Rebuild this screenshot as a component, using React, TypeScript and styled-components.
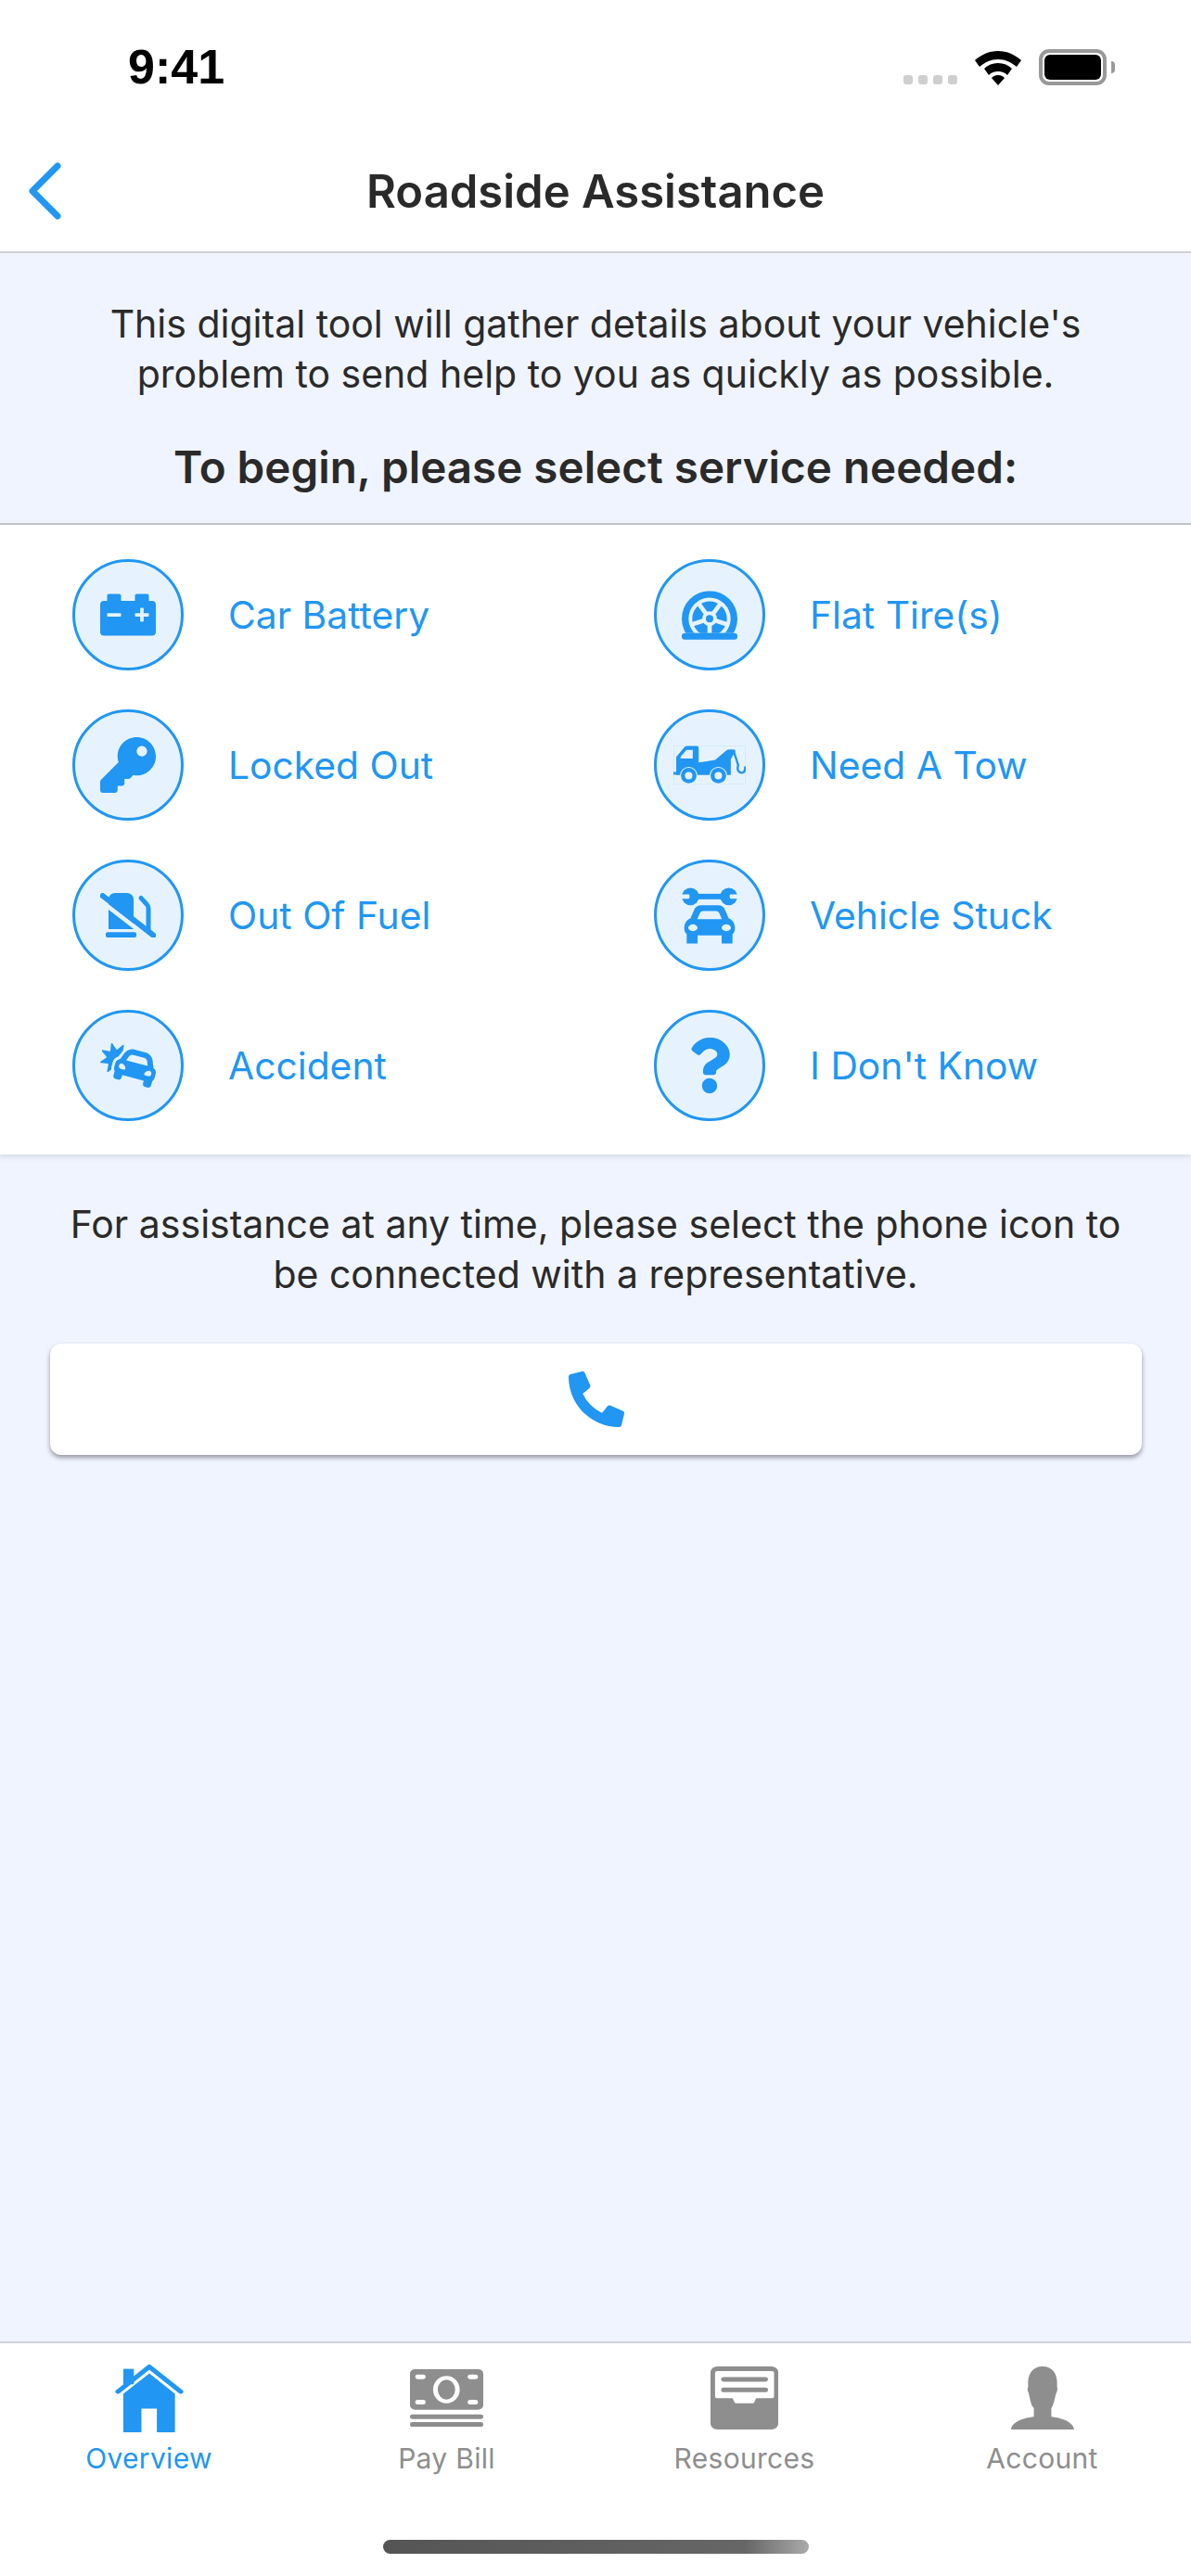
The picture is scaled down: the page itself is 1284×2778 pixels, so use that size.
import React from 'react';
import styled, { createGlobalStyle } from 'styled-components';
import { FaCarBattery, FaCarCrash, FaKey, FaPhoneAlt, FaQuestion } from 'react-icons/fa';

const BLUE = '#2196f3';
const TINT = '#e6f3fe';
const GRAY = '#8e8e8e';

const GlobalStyle = createGlobalStyle`
  html, body {
    margin: 0;
    padding: 0;
    background: #fff;
  }
  * {
    box-sizing: border-box;
  }
`;

const Page = styled.div`
  width: 1284px;
  height: 2778px;
  display: flex;
  flex-direction: column;
  background: #f0f4fe;
  font-family: Inter, 'Liberation Sans', sans-serif;
  color: #2a2a2a;
  overflow: hidden;
`;

const StatusBar = styled.div`
  height: 130px;
  flex: none;
  background: #fff;
  display: flex;
  justify-content: space-between;
  align-items: flex-start;
  padding: 42px 91px 0 138px;
`;

const Clock = styled.span`
  font-family: 'Liberation Sans', sans-serif;
  font-weight: 700;
  font-size: 52px;
  line-height: 60px;
  color: #000;
`;

const StatusIcons = styled.div`
  display: flex;
  align-items: flex-end;
  padding-top: 11px;
  height: 50px;
`;

const SignalDots = styled.div`
  display: flex;
  gap: 6px;
  margin-right: 19px;
  margin-bottom: 1px;
`;

const SignalDot = styled.span`
  width: 10px;
  height: 10px;
  border-radius: 3px;
  background: #cfcfcf;
`;

const BatteryShell = styled.div`
  width: 73px;
  height: 39px;
  margin-left: 19px;
  border: 4px solid #999;
  border-radius: 11px;
  padding: 2px;
  position: relative;

  &::after {
    content: '';
    position: absolute;
    right: -13px;
    top: 9px;
    width: 4px;
    height: 13px;
    border-radius: 0 4px 4px 0;
    background: #999;
  }
`;

const BatteryFill = styled.div`
  width: 100%;
  height: 100%;
  border-radius: 6px;
  background: #000;
`;

const NavBar = styled.header`
  height: 143px;
  flex: none;
  background: #fff;
  border-bottom: 2px solid #cfcfd6;
  display: flex;
  align-items: center;
  justify-content: center;
  position: relative;
`;

const BackButton = styled.span`
  position: absolute;
  left: 30px;
  top: 45px;
  display: flex;
`;

const NavTitle = styled.h1`
  margin: 0;
  font-size: 49px;
  font-weight: 600;
  line-height: 58px;
  padding-top: 12px;
`;

const Intro = styled.section`
  height: 293px;
  flex: none;
  padding-top: 49px;
  border-bottom: 2px solid #c5c7ce;
  text-align: center;
`;

const IntroText = styled.p`
  margin: 0;
  font-size: 41px;
  line-height: 54px;
`;

const IntroPrompt = styled.p`
  margin: 45px 0 0;
  font-size: 47.6px;
  font-weight: 600;
  line-height: 58px;
`;

const ServiceGrid = styled.section`
  flex: none;
  height: 679px;
  background: #fff;
  display: grid;
  grid-template-columns: 627px 1fr;
  grid-auto-rows: 120px;
  row-gap: 42px;
  padding: 37px 0 0 78px;
  box-shadow: 0 2px 6px rgba(80, 90, 120, 0.18);
  position: relative;
`;

const ServiceRow = styled.div`
  display: flex;
  align-items: center;
  gap: 48px;
`;

const ServiceCircle = styled.span`
  width: 120px;
  height: 120px;
  flex: none;
  border-radius: 50%;
  border: 3px solid ${BLUE};
  background: ${TINT};
  color: ${BLUE};
  display: flex;
  align-items: center;
  justify-content: center;
`;

const ServiceLabel = styled.span`
  font-size: 40.8px;
  color: ${BLUE};
`;

const Help = styled.section`
  flex: 1;
  padding: 48px 54px 0;
`;

const HelpText = styled.p`
  margin: 0;
  text-align: center;
  font-size: 41px;
  line-height: 54px;
`;

const CallButton = styled.button`
  display: flex;
  align-items: center;
  justify-content: center;
  width: 1177px;
  height: 120px;
  margin-top: 48px;
  border: 0;
  padding: 0;
  border-radius: 12px;
  background: #fff;
  color: ${BLUE};
  box-shadow: 0 3px 5px rgba(40, 40, 50, 0.45);
`;

const TabBar = styled.nav`
  height: 253px;
  flex: none;
  background: #fff;
  border-top: 2px solid #cfd0d8;
  position: relative;
  display: grid;
  grid-template-columns: repeat(4, 321px);
`;

const Tab = styled.div<{ $active?: boolean }>`
  height: 142px;
  display: flex;
  flex-direction: column;
  align-items: center;
  justify-content: flex-end;
  gap: 9px;
  color: ${({ $active }) => ($active ? BLUE : GRAY)};
`;

const TabIcon = styled.span`
  height: 76px;
  display: flex;
  align-items: center;
`;

const TabLabel = styled.span`
  font-size: 30px;
  line-height: 36px;
  letter-spacing: 0.3px;
`;

const HomeIndicator = styled.div`
  position: absolute;
  left: 413px;
  top: 212px;
  width: 459px;
  height: 15px;
  border-radius: 8px;
  background: linear-gradient(90deg, #555 0%, #666 85%, #aaa 100%);
`;

const WifiGlyph = () => (
  <svg width="50" height="37" viewBox="0 0 50 37" fill="#000">
    <path d="M25 0C15 0 7 4 0 10l5 7c6-5 12-8 20-8s14 3 20 8l5-7C43 4 35 0 25 0z" />
    <path d="M25 13c-6 0-11 2-15 6l5 7c3-3 6-4 10-4s7 1 10 4l5-7c-4-4-9-6-15-6z" />
    <path d="M25 26c-3 0-5 1-7 3l7 8 7-8c-2-2-4-3-7-3z" />
  </svg>
);

const BackChevron = () => (
  <svg width="36" height="62" viewBox="0 0 36 62" fill="none">
    <path d="M32 4 L5 31 L32 58" stroke={BLUE} strokeWidth="7" strokeLinecap="round" strokeLinejoin="round" />
  </svg>
);

const FlatTireGlyph = () => (
  <svg width="60" height="53" viewBox="165 181 180 158">
    <defs>
      <clipPath id="rimClip">
        <rect x="165" y="181" width="180" height="137" />
      </clipPath>
    </defs>
    <g clipPath="url(#rimClip)">
      <circle cx="255" cy="271" r="90" fill={BLUE} />
      <circle cx="255" cy="271" r="68" fill={TINT} />
      <circle cx="255" cy="271" r="56" fill={BLUE} />
      {[36, 108, 180, 252, 324].map((a) => (
        <rect key={a} x="248" y="205" width="14" height="66" fill={TINT} transform={`rotate(${a} 255 271)`} />
      ))}
      <circle cx="255" cy="271" r="24" fill={TINT} />
      <circle cx="255" cy="271" r="12" fill={BLUE} />
    </g>
    <rect x="165" y="318" width="180" height="21" rx="10" fill={BLUE} />
  </svg>
);

const TowTruckGlyph = () => (
  <svg width="78" height="42" viewBox="136 676 232 124">
    <rect x="137" y="677" width="230" height="122" fill="none" stroke="#cfe6fb" strokeWidth="2" />
    <path
      d="M145 770V712l27-32q3-3 8-3h32q5 0 5 5v48l53-8 35-30q5-4 10-4h15q5 0 5 5l-15 27v50z"
      fill={BLUE}
    />
    <path d="M159 717v-6l19-21h20v27z" fill={TINT} />
    <path d="M136 765h20" stroke={BLUE} strokeWidth="9" strokeLinecap="round" />
    <path d="M330 695l14 44c-6 14 2 24 11 24 8 0 11-8 11-18" fill="none" stroke={BLUE} strokeWidth="7" strokeLinecap="round" />
    <circle cx="185" cy="772" r="28" fill={TINT} />
    <circle cx="185" cy="772" r="25" fill={BLUE} />
    <circle cx="185" cy="772" r="12" fill={TINT} />
    <circle cx="280" cy="772" r="28" fill={TINT} />
    <circle cx="280" cy="772" r="25" fill={BLUE} />
    <circle cx="280" cy="772" r="12" fill={TINT} />
  </svg>
);

const NoFuelGlyph = () => (
  <svg width="60" height="48" viewBox="204 158 180 144">
    <path d="M231 275V180c0-13 9-22 22-22h37c13 0 22 9 22 22v95z" fill={BLUE} />
    <rect x="222" y="285" width="99" height="17" rx="6" fill={BLUE} />
    <path
      d="M336 174l18 20c5 5 6 9 6 14v70"
      fill="none"
      stroke={BLUE}
      strokeWidth="15"
      strokeLinecap="round"
    />
    <path d="M204 182l150 116" stroke={TINT} strokeWidth="14" />
    <path d="M212 167l164 128" stroke={BLUE} strokeWidth="18" strokeLinecap="round" />
  </svg>
);

const StuckCarGlyph = () => (
  <svg width="60" height="61" viewBox="165 140 180 182">
    <rect x="200" y="160" width="110" height="18" fill={BLUE} />
    <circle cx="193" cy="169" r="28" fill={BLUE} />
    <circle cx="317" cy="169" r="28" fill={BLUE} />
    <rect x="160" y="162" width="30" height="14" rx="4" fill={TINT} />
    <rect x="320" y="162" width="30" height="14" rx="4" fill={TINT} />
    <path
      d="M181 321V290c-6-4-8-10-8-20 0-14 8-26 20-30l12-28c4-10 12-15 22-15h56c10 0 18 5 22 15l12 28c12 4 20 16 20 30 0 10-2 16-8 20v31h-35v-26h-78v26z"
      fill={BLUE}
    />
    <path d="M215 242l8-18c2-5 6-8 11-8h42c5 0 9 3 11 8l8 18z" fill={TINT} />
    <ellipse cx="201" cy="270" rx="15" ry="11" fill={TINT} />
    <ellipse cx="309" cy="270" rx="15" ry="11" fill={TINT} />
  </svg>
);

const HomeGlyph = () => (
  <svg width="74" height="73" viewBox="306 148 182 220" preserveAspectRatio="none" fill={BLUE}>
    <path d="M328 243l69-66 68 66v125h-48v-77h-41v77h-48z" />
    <rect x="328" y="162" width="28" height="50" />
    <path d="M314 236l83-81 83 81" fill="none" stroke={BLUE} strokeWidth="14" strokeLinecap="round" strokeLinejoin="round" />
  </svg>
);

const BillGlyph = () => (
  <svg width="79" height="62" viewBox="1087 165 193 186" preserveAspectRatio="none" fill={GRAY}>
    <rect x="1087" y="165" width="193" height="131" rx="14" />
    <rect x="1101" y="182" width="27" height="15" rx="7" fill="#fff" />
    <rect x="1239" y="182" width="27" height="15" rx="7" fill="#fff" />
    <rect x="1101" y="264" width="27" height="15" rx="7" fill="#fff" />
    <rect x="1239" y="264" width="27" height="15" rx="7" fill="#fff" />
    <ellipse cx="1183" cy="231" rx="29" ry="38" fill="none" stroke="#fff" strokeWidth="12" />
    <rect x="1087" y="311" width="193" height="15" rx="7" />
    <rect x="1087" y="336" width="193" height="15" rx="7" />
  </svg>
);

const DrawerGlyph = () => (
  <svg width="73" height="68" viewBox="310 156 178 203" preserveAspectRatio="none" fill={GRAY}>
    <rect x="310" y="156" width="178" height="203" rx="18" />
    <path
      d="M322 177c0-4 2-6 6-6h143c4 0 6 2 6 6v75c0 4-2 6-6 6h-41l-4 11c-1 4-3 6-7 6h-40c-4 0-6-2-7-6l-4-11h-40c-4 0-6-2-6-6z"
      fill="#fff"
    />
    <rect x="338" y="190" width="123" height="15" rx="7" />
    <rect x="338" y="224" width="123" height="15" rx="7" />
  </svg>
);

const PersonGlyph = () => (
  <svg width="68" height="68" viewBox="1098 156 166 203" preserveAspectRatio="none" fill={GRAY}>
    <path d="M1098 359c2-24 32-37 60-41v-28c-8-10-10-30-14-50-4-10-2-15-1-20-3-40 12-64 38-64s41 24 38 64c2 8 1 15-3 25-4 20-6 35-12 45v28c28 4 58 17 60 41z" />
  </svg>
);

const services = [
  { label: 'Car Battery', icon: <FaCarBattery size={60} /> },
  { label: 'Flat Tire(s)', icon: <FlatTireGlyph /> },
  { label: 'Locked Out', icon: <FaKey size={60} /> },
  { label: 'Need A Tow', icon: <TowTruckGlyph /> },
  { label: 'Out Of Fuel', icon: <NoFuelGlyph /> },
  { label: 'Vehicle Stuck', icon: <StuckCarGlyph /> },
  { label: 'Accident', icon: <FaCarCrash size={60} /> },
  { label: "I Don't Know", icon: <FaQuestion size={60} /> },
];

const tabs = [
  { label: 'Overview', icon: <HomeGlyph />, active: true },
  { label: 'Pay Bill', icon: <BillGlyph /> },
  { label: 'Resources', icon: <DrawerGlyph /> },
  { label: 'Account', icon: <PersonGlyph /> },
];

const App: React.FC = () => {
  return (
    <Page>
      <GlobalStyle />
      <StatusBar>
        <Clock>9:41</Clock>
        <StatusIcons>
          <SignalDots>
            <SignalDot />
            <SignalDot />
            <SignalDot />
            <SignalDot />
          </SignalDots>
          <WifiGlyph />
          <BatteryShell>
            <BatteryFill />
          </BatteryShell>
        </StatusIcons>
      </StatusBar>

      <NavBar>
        <BackButton>
          <BackChevron />
        </BackButton>
        <NavTitle>Roadside Assistance</NavTitle>
      </NavBar>

      <Intro>
        <IntroText>
          This digital tool will gather details about your vehicle's
          <br />
          problem to send help to you as quickly as possible.
        </IntroText>
        <IntroPrompt>To begin, please select service needed:</IntroPrompt>
      </Intro>

      <ServiceGrid>
        {services.map((service) => (
          <ServiceRow key={service.label}>
            <ServiceCircle>{service.icon}</ServiceCircle>
            <ServiceLabel>{service.label}</ServiceLabel>
          </ServiceRow>
        ))}
      </ServiceGrid>

      <Help>
        <HelpText>
          For assistance at any time, please select the phone icon to
          <br />
          be connected with a representative.
        </HelpText>
        <CallButton aria-label="Call a representative">
          <FaPhoneAlt size={60} />
        </CallButton>
      </Help>

      <TabBar>
        {tabs.map((tab) => (
          <Tab key={tab.label} $active={tab.active}>
            <TabIcon>{tab.icon}</TabIcon>
            <TabLabel>{tab.label}</TabLabel>
          </Tab>
        ))}
        <HomeIndicator />
      </TabBar>
    </Page>
  );
};

export default App;
